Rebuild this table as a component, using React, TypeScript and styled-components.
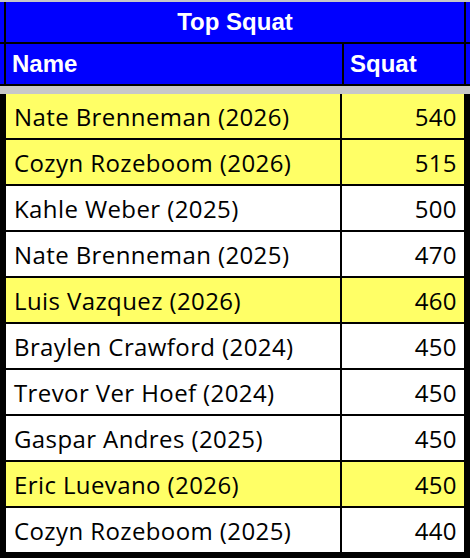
import React from 'react';
import styled, { createGlobalStyle } from 'styled-components';

type Lift = {
  name: string;
  year: number;
  squat: number;
};

const lifts: Lift[] = [
  { name: 'Nate Brenneman', year: 2026, squat: 540 },
  { name: 'Cozyn Rozeboom', year: 2026, squat: 515 },
  { name: 'Kahle Weber', year: 2025, squat: 500 },
  { name: 'Nate Brenneman', year: 2025, squat: 470 },
  { name: 'Luis Vazquez', year: 2026, squat: 460 },
  { name: 'Braylen Crawford', year: 2024, squat: 450 },
  { name: 'Trevor Ver Hoef', year: 2024, squat: 450 },
  { name: 'Gaspar Andres', year: 2025, squat: 450 },
  { name: 'Eric Luevano', year: 2026, squat: 450 },
  { name: 'Cozyn Rozeboom', year: 2025, squat: 440 },
];

// current class gets the yellow highlight
const HIGHLIGHT_YEAR = 2026;

const GlobalStyle = createGlobalStyle`
  body {
    margin: 0;
    background: #c8c8c8;
  }
`;

const Sheet = styled.div`
  width: 470px;
  padding-top: 2px;
`;

const HeaderRow = styled.div`
  display: flex;
  height: 40px;
  padding: 0 4px;
  background: #0000ff;
  border-bottom: 2px solid #000;
`;

const HeaderCell = styled.div<{ width?: number; center?: boolean; last?: boolean }>`
  display: flex;
  align-items: center;
  justify-content: ${({ center }) => (center ? 'center' : 'flex-start')};
  flex: ${({ width }) => (width ? `0 0 ${width}px` : '1')};
  padding: 0 6px;
  border-left: 2px solid #000;
  border-right: ${({ last }) => (last ? '2px solid #000' : 'none')};
  color: #fff;
  font-family: 'Liberation Sans', Arial, sans-serif;
  font-weight: 700;
  font-size: 24px;
  box-sizing: border-box;
`;

const Body = styled.div`
  margin-top: 8px;
  border-left: 6px solid #000;
  border-right: 6px solid #000;
  border-bottom: 6px solid #000;
`;

const Row = styled.div<{ highlight?: boolean }>`
  display: flex;
  height: 44px;
  background: ${({ highlight }) => (highlight ? '#ffff66' : '#fff')};
  border-bottom: 2px solid #000;
`;

const NameCell = styled.div`
  display: flex;
  align-items: center;
  flex: 0 0 336px;
  padding-left: 8px;
  box-sizing: border-box;
  border-right: 2px solid #000;
  font-family: 'Open Sans', 'Noto Sans', sans-serif;
  font-size: 24px;
  letter-spacing: 0.4px;
  color: #000;
`;

const ValueCell = styled.div`
  display: flex;
  align-items: center;
  justify-content: flex-end;
  flex: 1;
  padding-right: 7px;
  font-family: 'Open Sans', 'Noto Sans', sans-serif;
  font-size: 24px;
  letter-spacing: 0.4px;
  color: #000;
`;

const App: React.FC = () => (
  <>
    <GlobalStyle />
    <Sheet>
      <HeaderRow>
        <HeaderCell center last>
          Top Squat
        </HeaderCell>
      </HeaderRow>
      <HeaderRow>
        <HeaderCell width={338}>Name</HeaderCell>
        <HeaderCell width={124} last>
          Squat
        </HeaderCell>
      </HeaderRow>
      <Body>
        {lifts.map((l, i) => (
          <Row key={i} highlight={l.year === HIGHLIGHT_YEAR}>
            <NameCell>
              {l.name} ({l.year})
            </NameCell>
            <ValueCell>{l.squat}</ValueCell>
          </Row>
        ))}
      </Body>
    </Sheet>
  </>
);

export default App;
